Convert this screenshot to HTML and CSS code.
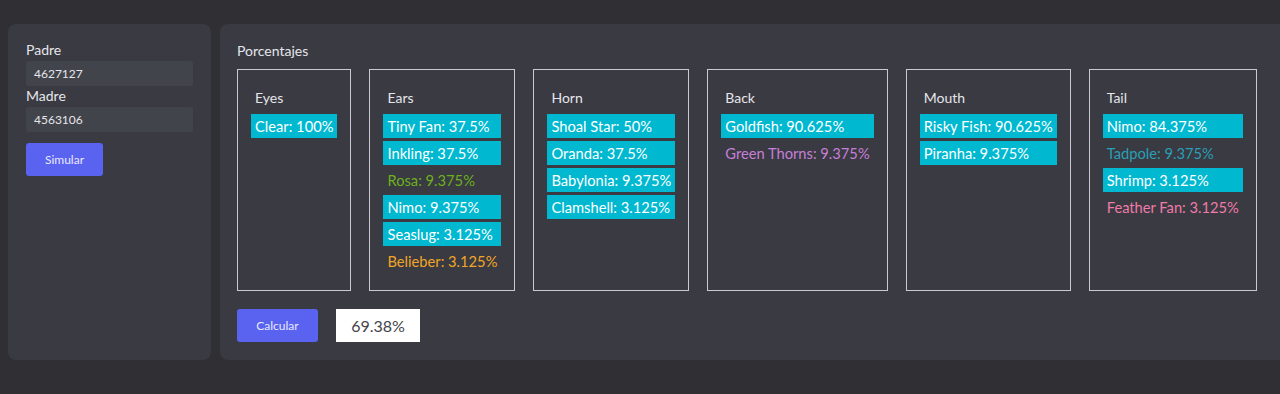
FILE: index.html
```html
<!DOCTYPE html>
<html lang="es">
<head>
    <meta charset="UTF-8">
    <meta name="viewport" content="width=device-width, initial-scale=1.0">
    <title>Breeding Simulator</title>
    <link rel="stylesheet" href="styles.css">
</head>
<body>
    <div class="layout">
        <aside class="panel parents-panel">
            <form class="parents-form" id="parentsForm">
                <label for="padre">Padre</label>
                <input type="text" id="padre" name="padre" value="4627127">
                <label for="madre">Madre</label>
                <input type="text" id="madre" name="madre" value="4563106">
                <button type="submit" class="btn">Simular</button>
            </form>
        </aside>

        <main class="panel results-panel">
            <h2 class="section-title">Porcentajes</h2>
            <div class="parts">
                <div class="part-card">
                    <h3 class="part-title">Eyes</h3>
                    <ul class="gene-list">
                        <li class="gene aquatic">Clear: 100%</li>
                    </ul>
                </div>
                <div class="part-card">
                    <h3 class="part-title">Ears</h3>
                    <ul class="gene-list">
                        <li class="gene aquatic">Tiny Fan: 37.5%</li>
                        <li class="gene aquatic">Inkling: 37.5%</li>
                        <li class="gene plant">Rosa: 9.375%</li>
                        <li class="gene aquatic">Nimo: 9.375%</li>
                        <li class="gene aquatic">Seaslug: 3.125%</li>
                        <li class="gene beast">Belieber: 3.125%</li>
                    </ul>
                </div>
                <div class="part-card">
                    <h3 class="part-title">Horn</h3>
                    <ul class="gene-list">
                        <li class="gene aquatic">Shoal Star: 50%</li>
                        <li class="gene aquatic">Oranda: 37.5%</li>
                        <li class="gene aquatic">Babylonia: 9.375%</li>
                        <li class="gene aquatic">Clamshell: 3.125%</li>
                    </ul>
                </div>
                <div class="part-card">
                    <h3 class="part-title">Back</h3>
                    <ul class="gene-list">
                        <li class="gene aquatic">Goldfish: 90.625%</li>
                        <li class="gene reptile">Green Thorns: 9.375%</li>
                    </ul>
                </div>
                <div class="part-card">
                    <h3 class="part-title">Mouth</h3>
                    <ul class="gene-list">
                        <li class="gene aquatic">Risky Fish: 90.625%</li>
                        <li class="gene aquatic">Piranha: 9.375%</li>
                    </ul>
                </div>
                <div class="part-card">
                    <h3 class="part-title">Tail</h3>
                    <ul class="gene-list">
                        <li class="gene aquatic">Nimo: 84.375%</li>
                        <li class="gene muted">Tadpole: 9.375%</li>
                        <li class="gene aquatic">Shrimp: 3.125%</li>
                        <li class="gene bird">Feather Fan: 3.125%</li>
                    </ul>
                </div>
            </div>
            <div class="actions">
                <button type="button" class="btn">Calcular</button>
                <div class="result">69.38%</div>
            </div>
        </main>
    </div>
</body>
</html>
```

FILE: styles.css
```css
:root {
    --bg: #2f2f34;
    --panel: #393a42;
    --input: #42444c;
    --text: #e6e6ea;
    --btn: #5a62f0;
    --aquatic: #00b8d0;
}

* {
    margin: 0;
    padding: 0;
    box-sizing: border-box;
    font-family: 'Lato', 'Noto Sans', sans-serif;
}

body {
    background: var(--bg);
    color: var(--text);
    overflow: hidden;
    height: 394px;
}

.layout {
    display: flex;
    gap: 9px;
    padding: 24px 0 0 8px;
}

.panel {
    background: var(--panel);
    border-radius: 8px;
    height: 336px;
}

.parents-panel {
    flex: 0 0 202px;
    padding: 16px 18px;
}

.parents-form {
    display: flex;
    flex-direction: column;
    align-items: flex-start;
}

.parents-form label {
    font-size: 14px;
    line-height: 20px;
    margin-bottom: 1px;
}

.parents-form input {
    width: 167px;
    height: 25px;
    border: none;
    border-radius: 2px;
    background: var(--input);
    color: var(--text);
    font-size: 12px;
    padding: 0 8px;
}

.parents-form input:focus {
    outline: none;
}

.btn {
    background: var(--btn);
    color: #e8e9ff;
    border: none;
    border-radius: 3px;
    font-size: 12px;
    height: 33px;
    padding: 0 18px;
    cursor: pointer;
}

.parents-form .btn {
    margin-top: 11px;
    width: 77px;
}

.results-panel {
    flex: 0 0 1080px;
    padding: 18px 18px 18px 17px;
}

.section-title {
    font-size: 14px;
    font-weight: 400;
    line-height: 18px;
    margin-bottom: 9px;
}

.parts {
    display: flex;
    gap: 18px;
}

.part-card {
    border: 1px solid #c9c9cf;
    height: 222px;
    padding: 18px 13px;
}

.part-title {
    font-size: 14px;
    font-weight: 400;
    line-height: 20px;
    padding-left: 4px;
    margin-bottom: 6px;
}

.gene-list {
    list-style: none;
    display: flex;
    flex-direction: column;
    gap: 3px;
}

.gene {
    font-size: 14.7px;
    line-height: 24px;
    padding: 0 4px;
    white-space: nowrap;
}

.gene.aquatic {
    background: var(--aquatic);
    color: #ffffff;
}

.gene.plant {
    color: #6cb01c;
}

.gene.beast {
    color: #f2a526;
}

.gene.reptile {
    color: #c77fd8;
}

.gene.muted {
    color: #2a9fb5;
}

.gene.bird {
    color: #f07ba8;
}

.actions {
    display: flex;
    gap: 18px;
    margin-top: 18px;
}

.actions .btn {
    width: 81px;
}

.result {
    width: 84px;
    height: 33px;
    background: #ffffff;
    color: #444449;
    font-size: 16px;
    display: grid;
    place-items: center;
}
```
